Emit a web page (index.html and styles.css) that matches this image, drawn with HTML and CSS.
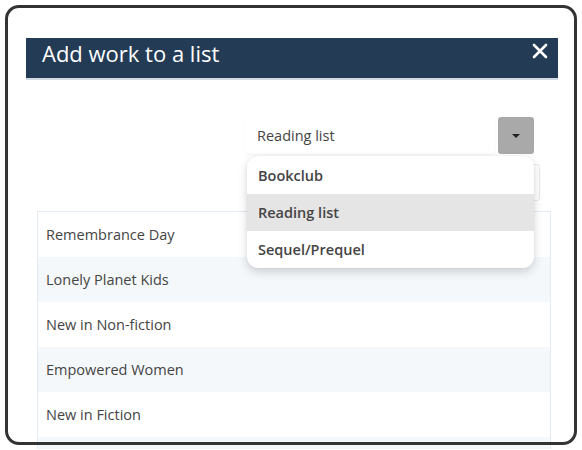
FILE: index.html
```html
<!DOCTYPE html>
<html>
<head>
<meta charset="utf-8">
<link rel="stylesheet" href="styles.css">
</head>
<body>
<div class="page">
  <div class="header">
    <span class="title">Add work to a list</span>
    <span class="close">
      <svg width="16" height="16" viewBox="0 0 16 16"><path d="M2 2 L14 14 M14 2 L2 14" stroke="#fff" stroke-width="2.6" stroke-linecap="round"/></svg>
    </span>
  </div>
  <div class="content">
    <div class="select-row">
      <div class="select">
        <div class="select-value">Reading list</div>
        <div class="select-btn"><span class="caret"></span></div>
        <ul class="menu">
          <li class="item">Bookclub</li>
          <li class="item active">Reading list</li>
          <li class="item">Sequel/Prequel</li>
        </ul>
      </div>
    </div>
    <div class="hidden-row"><div class="ghost-box"></div></div>
    <ul class="list">
      <li class="row">Remembrance Day</li>
      <li class="row alt">Lonely Planet Kids</li>
      <li class="row">New in Non-fiction</li>
      <li class="row alt">Empowered Women</li>
      <li class="row">New in Fiction</li>
      <li class="row alt tail"></li>
    </ul>
  </div>
</div>
<div class="frame"></div>
</body>
</html>
```
FILE: styles.css
```css
html, body {
  margin: 0;
  padding: 0;
  background: #fff;
  width: 582px;
  height: 450px;
  overflow: hidden;
  font-family: "Open Sans", "Noto Sans", sans-serif;
}
.page {
  padding-top: 38px;
  padding-left: 26px;
  width: 532px;
}
.header {
  background: #243b55;
  border-bottom: 2px solid #d2dbe3;
  display: flex;
  align-items: flex-start;
  justify-content: space-between;
  padding: 4px 10px 0 16px;
  box-sizing: border-box;
  height: 42px;
}
.title {
  color: #fff;
  font-size: 22px;
  line-height: 1;
}
.close {
  display: flex;
  padding-top: 1px;
}
.content {
  display: flex;
  flex-direction: column;
}
.select-row {
  margin-top: 37px;
  padding-left: 219px;
  height: 37px;
}
.select {
  position: relative;
  width: 289px;
  height: 37px;
  display: flex;
  gap: 3px;
}
.select-value {
  flex: 1;
  display: flex;
  align-items: center;
  padding-left: 12px;
  font-size: 14.5px;
  color: #444;
  border-radius: 4px;
  box-shadow: 0 1px 2px rgba(0,0,0,0.06);
}
.select-btn {
  width: 36px;
  height: 37px;
  background: #a9a9a9;
  border-radius: 3px;
  display: flex;
  align-items: center;
  justify-content: center;
}
.caret {
  width: 0;
  height: 0;
  border-left: 4px solid transparent;
  border-right: 4px solid transparent;
  border-top: 4px solid #222;
}
.menu {
  position: absolute;
  top: 39px;
  left: 2px;
  right: 0;
  margin: 0;
  padding: 1px 0 0;
  list-style: none;
  background: #fff;
  border-radius: 11px;
  box-shadow: 0 4px 10px rgba(0,0,0,0.16), 0 0 2px rgba(0,0,0,0.08);
  overflow: hidden;
  z-index: 5;
}
.item {
  height: 37px;
  display: flex;
  align-items: center;
  padding-left: 11px;
  font-size: 14.5px;
  font-weight: 600;
  color: #444;
}
.item.active {
  background: #e5e5e5;
}
.hidden-row {
  height: 57px;
  padding-left: 224px;
  display: flex;
  align-items: center;
}
.ghost-box {
  width: 290px;
  height: 37px;
  border: 1px solid #e6e9ec;
  border-radius: 3px;
  box-sizing: border-box;
}
.list {
  margin: 0 0 0 11px;
  padding: 0;
  list-style: none;
  width: 514px;
  border: 1px solid #e3eaf1;
  border-bottom: none;
  box-sizing: border-box;
}
.row {
  height: 45px;
  display: flex;
  align-items: center;
  padding-left: 8px;
  font-size: 14.5px;
  color: #444;
}
.row.alt {
  background: #f5f8fb;
}
.row.tail {
  height: 12px;
}
.frame {
  position: absolute;
  left: 5px;
  top: 5px;
  width: 572px;
  height: 440px;
  box-sizing: border-box;
  border: 3px solid #333;
  border-radius: 14px;
  pointer-events: none;
}
```
